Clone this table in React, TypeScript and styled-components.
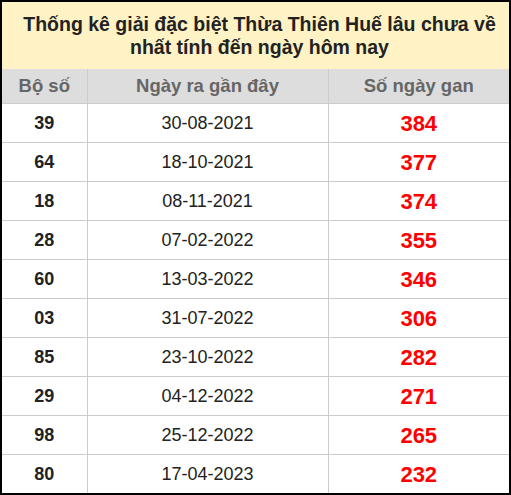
import React from "react";
import styled, { createGlobalStyle } from "styled-components";

const GlobalStyle = createGlobalStyle`
  html, body {
    margin: 0;
    padding: 0;
    background: #fff;
  }
  * {
    box-sizing: border-box;
  }
`;

const Frame = styled.div`
  width: 511px;
  height: 495px;
  border: 2px solid #000;
  font-family: Arial, "Liberation Sans", Helvetica, sans-serif;
  display: flex;
  flex-direction: column;
  background: #fff;
`;

const Title = styled.h2`
  margin: 0;
  height: 67px;
  flex: none;
  background: #fff2c5;
  color: #222;
  font-size: 19.5px;
  font-weight: bold;
  line-height: 23px;
  text-align: center;
  padding: 11px 4px 0 12px;
`;

const Table = styled.table`
  width: 100%;
  border-collapse: collapse;
  table-layout: fixed;
  flex: 1;

  th,
  td {
    border-left: 1px solid #cccccc;
    border-bottom: 1px solid #cccccc;
    text-align: center;
    padding: 0;
  }
  th:first-child,
  td:first-child {
    border-left: none;
  }
  tr:last-child td {
    border-bottom: none;
  }
`;

const HeadCell = styled.th`
  height: 34px;
  background: #dddddd;
  color: #666;
  font-size: 18.5px;
  font-weight: bold;
`;

const Cell = styled.td<{ $kind?: "num" | "date" | "gan" }>`
  height: 39px;
  padding-top: 2px !important;
  color: ${(p) => (p.$kind === "gan" ? "#ff0000" : "#222")};
  font-size: ${(p) => (p.$kind === "gan" ? "22px" : "18px")};
  font-weight: ${(p) => (p.$kind === "date" ? "normal" : "bold")};
`;

const rows = [
  ["39", "30-08-2021", "384"],
  ["64", "18-10-2021", "377"],
  ["18", "08-11-2021", "374"],
  ["28", "07-02-2022", "355"],
  ["60", "13-03-2022", "346"],
  ["03", "31-07-2022", "306"],
  ["85", "23-10-2022", "282"],
  ["29", "04-12-2022", "271"],
  ["98", "25-12-2022", "265"],
  ["80", "17-04-2023", "232"],
];

function App() {
  return (
    <>
      <GlobalStyle />
      <Frame>
        <Title>
          Thống kê giải đặc biệt Thừa Thiên Huế lâu chưa về
          <br />
          nhất tính đến ngày hôm nay
        </Title>
        <Table>
          <colgroup>
            <col style={{ width: 85 }} />
            <col style={{ width: 241 }} />
            <col />
          </colgroup>
          <thead>
            <tr>
              <HeadCell>Bộ số</HeadCell>
              <HeadCell>Ngày ra gần đây</HeadCell>
              <HeadCell>Số ngày gan</HeadCell>
            </tr>
          </thead>
          <tbody>
            {rows.map((r) => (
              <tr key={r[0]}>
                <Cell $kind="num">{r[0]}</Cell>
                <Cell $kind="date">{r[1]}</Cell>
                <Cell $kind="gan">{r[2]}</Cell>
              </tr>
            ))}
          </tbody>
        </Table>
      </Frame>
    </>
  );
}

export default App;
